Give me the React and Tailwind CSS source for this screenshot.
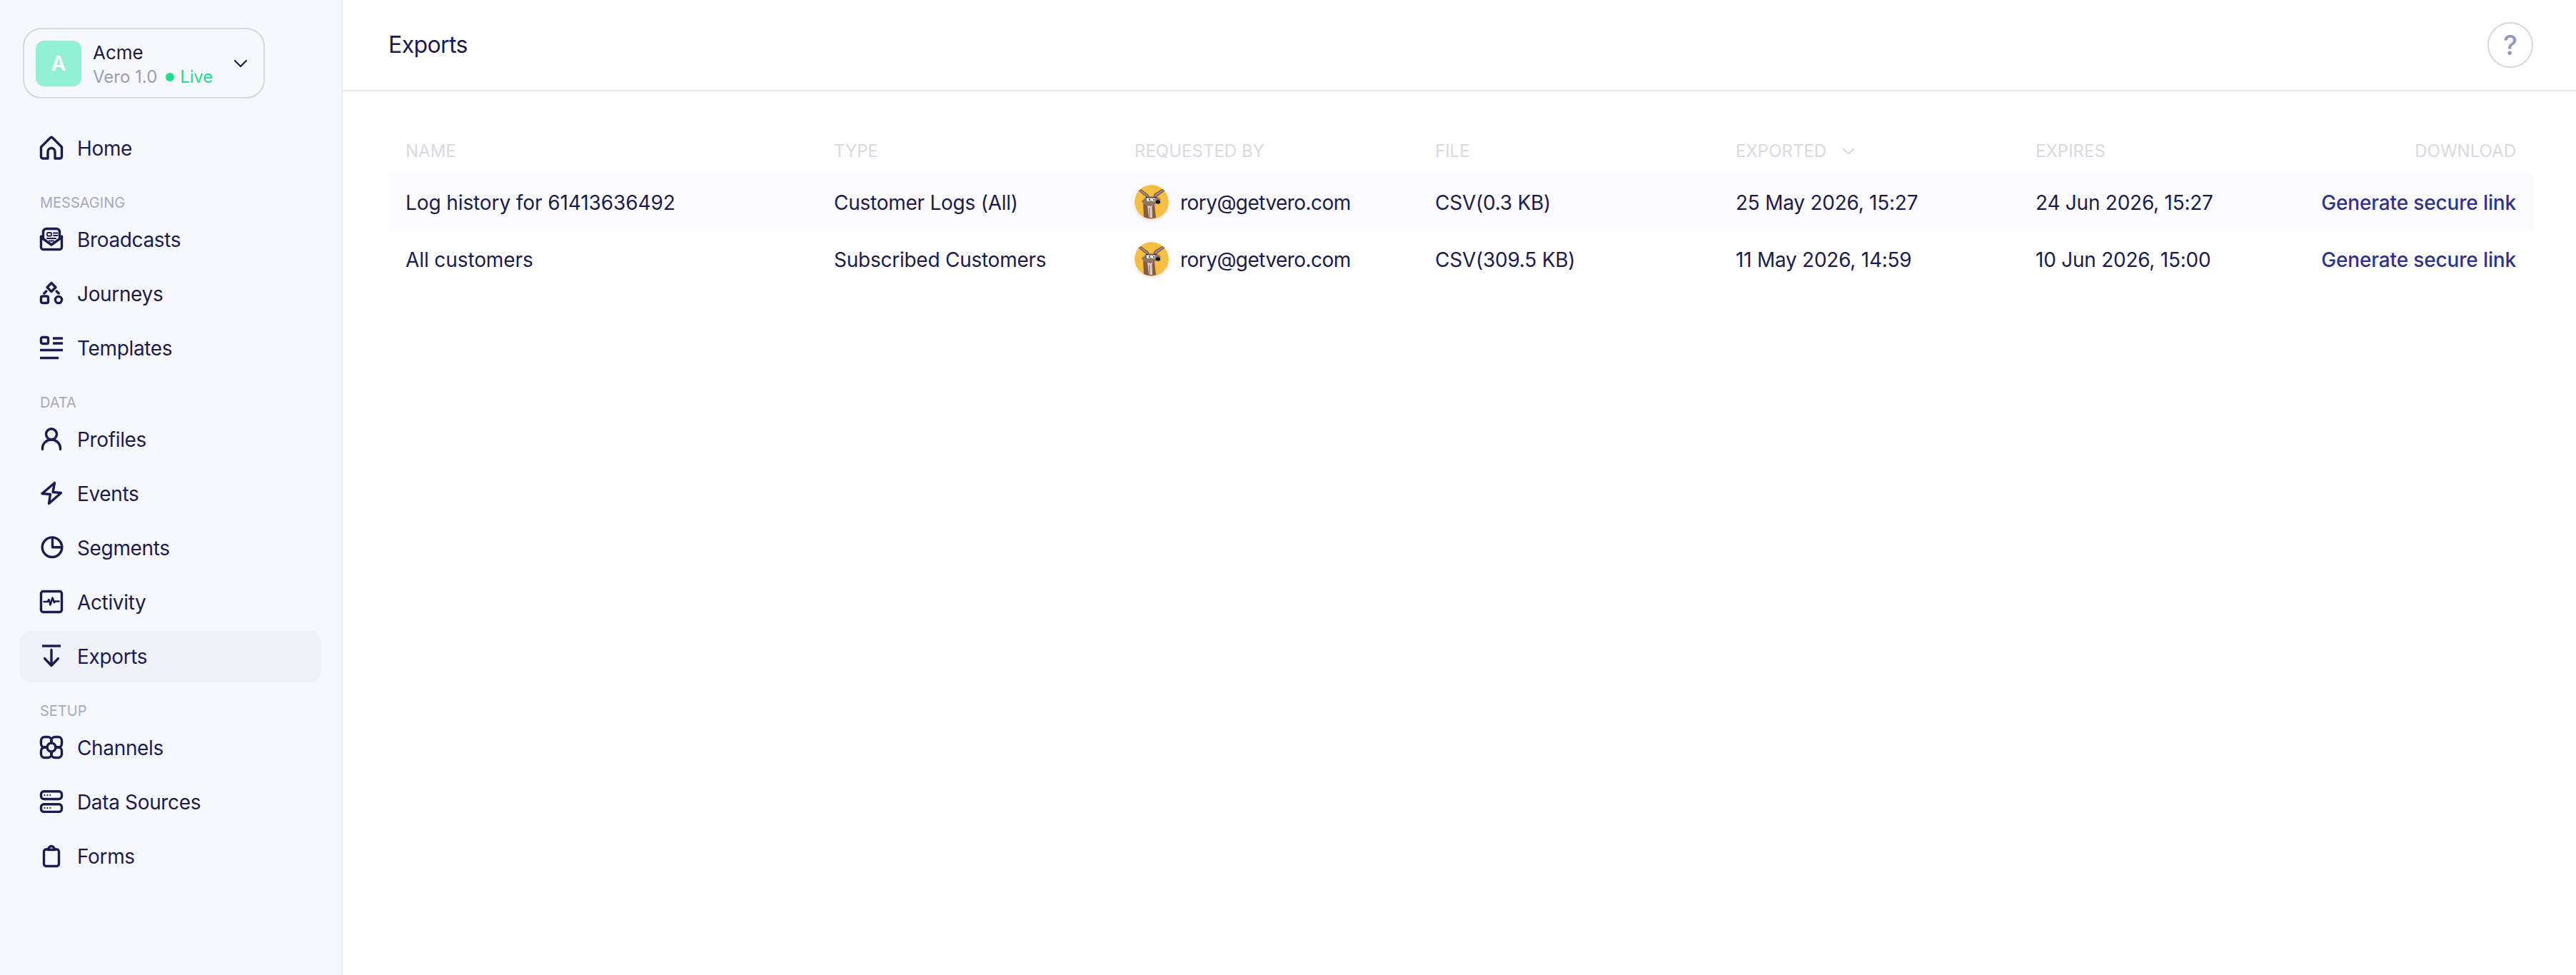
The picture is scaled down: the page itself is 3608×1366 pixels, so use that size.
const NAVY = "#1b1b50";

const Svg = ({ children, sw = 3.4 }) => (
  <svg width="32" height="32" viewBox="0 0 32 32" fill="none" stroke={NAVY} strokeWidth={sw} strokeLinecap="round" strokeLinejoin="round" className="shrink-0 overflow-visible">
    {children}
  </svg>
);

const icons = {
  home: (
    <Svg>
      <path d="M1.500 15.500V15L14.500 2a2.200 2.200 0 0 1 3 0L30.500 15v13.500a2.500 2.500 0 0 1-2.500 2.500H21V21.500a5 5 0 0 0-10 0V31H4a2.500 2.500 0 0 1-2.500-2.500Z" />
    </Svg>
  ),
  broadcasts: (
    <Svg>
      <path d="M1.500 12V27.500a3 3 0 0 0 3 3h23a3 3 0 0 0 3-3V12" />
      <path d="M1.500 13.500 16 24l14.500-10.500" />
      <path d="M4.500 15V6a4.500 4.500 0 0 1 4.500-4.500h14A4.500 4.500 0 0 1 27.500 6v9" />
      <rect x="10" y="7" width="6" height="4.500" rx="1" strokeWidth="1.800" />
      <path d="M19 7.500h5.500M19 11h5.500M10 15h12M13 18.500h6" strokeWidth="2" />
    </Svg>
  ),
  journeys: (
    <Svg>
      <path d="M16 1.500 22 7.500 16 13.500 10 7.500Z" />
      <rect x="1.500" y="20" width="10" height="9.500" rx="2" />
      <circle cx="26" cy="25" r="4.600" />
      <path d="M5.800 16 8.800 13M26.200 16 23.200 13" />
    </Svg>
  ),
  templates: (
    <Svg>
      <rect x="1.500" y="1.500" width="10" height="9" rx="2" />
      <path d="M18 3h14M18 10h14M0 19.500h32M0 30.500h26" strokeLinecap="butt" />
    </Svg>
  ),
  profiles: (
    <Svg>
      <circle cx="16" cy="9.300" r="7.500" />
      <path d="M3.500 30.500V29a12.500 12 0 0 1 25 0v1.500" />
    </Svg>
  ),
  events: (
    <Svg>
      <path d="M20.500 1.500 3 16.500 14.500 17.500 12.500 30.500 29.500 15.500 18 14.500Z" />
    </Svg>
  ),
  segments: (
    <Svg>
      <circle cx="17" cy="15.700" r="13.800" />
      <path d="M17.500 2.500v13.300H30.500" />
    </Svg>
  ),
  activity: (
    <Svg>
      <rect x="1.500" y="1.500" width="29" height="29" rx="3" />
      <path d="M5.500 16H10.500L12.500 13 14.500 20.500 17.500 10.500 20 17 21.500 15.500H26.500" strokeWidth="2.600" />
    </Svg>
  ),
  exports: (
    <Svg>
      <path d="M3 2h26" strokeLinecap="butt" />
      <path d="M16 7.500v21.500M6.500 19.500 16 29.500l9.500-10" />
    </Svg>
  ),
  channels: (
    <Svg>
      <path d="M16 9.500V6.500a5 5 0 0 0-5-5H6.500a5 5 0 0 0-5 5V11a5 5 0 0 0 5 5H10" />
      <path d="M16 9.500V6.500a5 5 0 0 1 5-5h4.500a5 5 0 0 1 5 5V11a5 5 0 0 1-5 5H22" />
      <path d="M16 22.500v3a5 5 0 0 1-5 5H6.500a5 5 0 0 1-5-5V21a5 5 0 0 1 5-5H10" />
      <path d="M16 22.500v3a5 5 0 0 0 5 5h4.500a5 5 0 0 0 5-5V21a5 5 0 0 0-5-5H22" />
      <circle cx="16" cy="16" r="6" />
    </Svg>
  ),
  sources: (
    <Svg>
      <rect x="1.500" y="1.800" width="29" height="10.700" rx="4" />
      <rect x="1.500" y="19.700" width="29" height="10.700" rx="4" />
      <path d="M6.300 7h.1M10.300 7h.1M14.300 7h.1M6.300 25h.1M10.300 25h.1M14.300 25h.1" strokeWidth="2.200" />
    </Svg>
  ),
  forms: (
    <Svg>
      <path d="M10.500 7H8.500a3 3 0 0 0-3 3v17.500a3 3 0 0 0 3 3h15a3 3 0 0 0 3-3V10a3 3 0 0 0-3-3h-2" />
      <path d="M10.500 7.500 13.500 3.500a3.500 3.500 0 0 1 5 0l3 4Z" />
    </Svg>
  ),
};

const Coyote = () => (
  <svg width="48" height="48" viewBox="0 0 48 48" className="mb-[2px] shrink-0 rounded-full shadow-[0_2px_4px_rgba(40,40,90,0.12)]">
    <circle cx="24" cy="24" r="24" fill="#f6bf41" />
    <path d="M7 5 L19 14 L20 17 L17 17 L6 8Z" fill="#a08a80" stroke="#3a2b2b" strokeWidth="0.800" />
    <path d="M41 5 L28 13 L27 17 L30 17 L42 8Z" fill="#a08a80" stroke="#3a2b2b" strokeWidth="0.800" />
    <path d="M12 25 L28 27 L30 46 Q21 49 13 45Z" fill="#8b5a3c" />
    <path d="M18 28 L25 28 L26 46 L20 46Z" fill="#d8d0cc" />
    <path d="M10 23 L17 16 L30 16 L37 20 L31 26 L23 30 L13 28Z" fill="#8f7467" />
    <ellipse cx="20" cy="20.500" rx="3" ry="2.800" fill="#f5f1ee" />
    <ellipse cx="26" cy="20.500" rx="3" ry="2.800" fill="#f5f1ee" />
    <circle cx="21" cy="21" r="1" fill="#1d1620" />
    <circle cx="27" cy="21" r="1" fill="#1d1620" />
    <path d="M16 17 L22 18.500M31 17 L24.500 18.500" stroke="#2a2024" strokeWidth="1" />
    <ellipse cx="33" cy="24" rx="3.200" ry="2.800" fill="#1d1620" />
    <path d="M21 32 L21 46M25 31 L25.500 46" stroke="#5a4034" strokeWidth="0.800" />
  </svg>
);

const sections = [
  { items: [["Home", "home"]] },
  { label: "MESSAGING", items: [["Broadcasts", "broadcasts"], ["Journeys", "journeys"], ["Templates", "templates"]] },
  { label: "DATA", items: [["Profiles", "profiles"], ["Events", "events"], ["Segments", "segments"], ["Activity", "activity"], ["Exports", "exports"]] },
  { label: "SETUP", items: [["Channels", "channels"], ["Data Sources", "sources"], ["Forms", "forms"]] },
];

const rows = [
  { name: "Log history for 61413636492", type: "Customer Logs (All)", file: "CSV(0.3 KB)", exported: "25 May 2026, 15:27", expires: "24 Jun 2026, 15:27", shaded: true },
  { name: "All customers", type: "Subscribed Customers", file: "CSV(309.5 KB)", exported: "11 May 2026, 14:59", expires: "10 Jun 2026, 15:00", shaded: false },
];

const GRID = "grid grid-cols-[600px_421px_421px_421px_420px_1fr] items-center";

export default function App() {
  return (
    <div className="relative flex h-[1366px] w-[3608px] overflow-hidden bg-white font-['Inter',sans-serif] text-[#1b1b50]">
      <aside className="flex w-[480px] shrink-0 flex-col border-r-2 border-[#e9eaf4] bg-[#f7f8fd]">
        <div className="ml-[32px] mt-[39px] flex h-[99px] w-[339px] items-center rounded-[26px] border-2 border-[#d6d6e4] pl-[16px]">
          <div className="flex h-[64px] w-[64px] items-center justify-center rounded-[12px] bg-[#93f1d3] text-[28px] font-semibold text-white">A</div>
          <div className="ml-[16px] flex flex-col pt-[2px]">
            <span className="text-[26px] leading-[36px]">Acme</span>
            <span className="flex items-center text-[24px] leading-[32px] text-[#9c9cb8]">
              Vero 1.0
              <span className="ml-[12px] h-[12px] w-[12px] rounded-full bg-[#1fdc8e]" />
              <span className="ml-[8px] tracking-[-0.2px] text-[#1fdc8e]">Live</span>
            </span>
          </div>
          <svg width="20" height="12" viewBox="0 0 20 12" fill="none" stroke={NAVY} strokeWidth="2.200" strokeLinecap="round" strokeLinejoin="round" className="ml-auto mr-[22px]">
            <path d="M2 2l8 8 8-8" />
          </svg>
        </div>

        <nav className="mt-[34px] flex flex-col">
          {sections.map((s, i) => (
            <div key={i} className="flex flex-col">
              {s.label && (
                <div className="mb-[4px] ml-[56px] mt-[28px] text-[20px] leading-[24px] text-[#a8a8c0]">{s.label}</div>
              )}
              <div className="flex flex-col gap-[4px]">
                {s.items.map(([label, icon]) => (
                  <div key={label} className={`mx-[28px] flex h-[72px] items-center gap-[20px] rounded-[16px] pl-[28px] text-[28px] tracking-[-0.35px] ${label === "Exports" ? "bg-[#f0f1f9]" : ""}`}>
                    <span className="mb-[2px] flex">{icons[icon]}</span>
                    <span>{label}</span>
                  </div>
                ))}
              </div>
            </div>
          ))}
        </nav>
      </aside>

      <main className="flex min-w-0 flex-1 flex-col">
        <header className="flex h-[128px] shrink-0 items-center justify-between border-b-2 border-[#e9e9f3] pl-[64px] pr-[60px]">
          <h1 className="text-[32px] font-normal tracking-[-0.6px]">Exports</h1>
          <div className="flex h-[64px] w-[64px] items-center justify-center rounded-full border-2 border-[#d6d6e4] text-[38px] font-medium text-[#9a96bb]">?</div>
        </header>

        <div className="ml-[64px] mr-[60px] mt-[52px] flex flex-col">
          <div className={`${GRID} h-[63px] text-[24px] text-[#d9d9e6]`}>
            <div className="px-[24px]">NAME</div>
            <div className="px-[24px]">TYPE</div>
            <div className="px-[24px]">REQUESTED BY</div>
            <div className="px-[24px]">FILE</div>
            <div className="flex items-center px-[24px]">
              EXPORTED
              <svg width="18" height="10" viewBox="0 0 18 10" fill="none" stroke="#d9d9e6" strokeWidth="2" strokeLinecap="round" strokeLinejoin="round" className="ml-[22px]">
                <path d="M1.500 1.500 9 8.500l7.500-7" />
              </svg>
            </div>
            <div className="flex items-center justify-between px-[24px]">
              <span>EXPIRES</span>
              <span>DOWNLOAD</span>
            </div>
          </div>
          {rows.map((r) => (
            <div key={r.name} className={`${GRID} h-[80px] pt-[2px] text-[28px] tracking-[-0.25px] ${r.shaded ? "bg-[#fbfbfe]" : ""}`}>
              <div className="px-[24px] tracking-[-0.1px]">{r.name}</div>
              <div className="px-[24px]">{r.type}</div>
              <div className="flex items-center gap-[16px] px-[24px] tracking-[-0.55px]">
                <Coyote />
                <span>rory@getvero.com</span>
              </div>
              <div className="px-[24px]">{r.file}</div>
              <div className="px-[24px]">{r.exported}</div>
              <div className="flex items-center justify-between px-[24px]">
                <span>{r.expires}</span>
                <span className="font-medium tracking-[-0.15px] text-[#2e3192]">Generate secure link</span>
              </div>
            </div>
          ))}
        </div>
      </main>
    </div>
  );
}
